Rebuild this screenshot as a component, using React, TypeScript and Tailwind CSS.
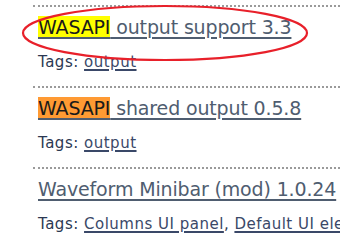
import React from "react";

const items = [
  { hl: "WASAPI", hlBg: "bg-[#ffff00]", rest: " output support 3.3", tags: ["output"] },
  { hl: "WASAPI", hlBg: "bg-[#ff9a33]", rest: " shared output 0.5.8", tags: ["output"] },
  { hl: "", hlBg: "", rest: "Waveform Minibar (mod) 1.0.24", tags: ["Columns UI panel", "Default UI element"] },
];

export default function App() {
  return (
    <div
      className="relative w-[340px] h-[245px] overflow-hidden bg-white pl-[33px] pt-[5px]"
      style={{ fontFamily: '"DejaVu Sans", sans-serif' }}
    >
      {items.map((it, i) => (
        <div key={i} className="border-t-2 border-dotted border-[#9a9a9a] h-[81px] pl-[5px] pt-[8px] whitespace-nowrap">
          <div className="text-[19px] leading-[24px] tracking-[-0.15px] text-[#4f5d70]">
            <a className="underline decoration-[1.5px] underline-offset-[3px]">
              {it.hl && <span className={`${it.hlBg} text-[#1a1a1a]`}>{it.hl}</span>}
              {it.rest}
            </a>
          </div>
          <div className="mt-[13px] text-[15px] leading-[20px] tracking-[0.5px] text-[#2b3852]">
            Tags:{" "}
            {it.tags.map((t, j) => (
              <React.Fragment key={j}>
                <a className="underline decoration-[1.5px] underline-offset-2 text-[#3a4868]">{t}</a>
                {j < it.tags.length - 1 ? ", " : ""}
              </React.Fragment>
            ))}
          </div>
        </div>
      ))}
      <svg className="absolute left-0 top-0 pointer-events-none" width="340" height="245">
        <ellipse cx="165" cy="33" rx="142" ry="27" fill="none" stroke="#e8202a" strokeWidth="2.2" />
      </svg>
    </div>
  );
}
